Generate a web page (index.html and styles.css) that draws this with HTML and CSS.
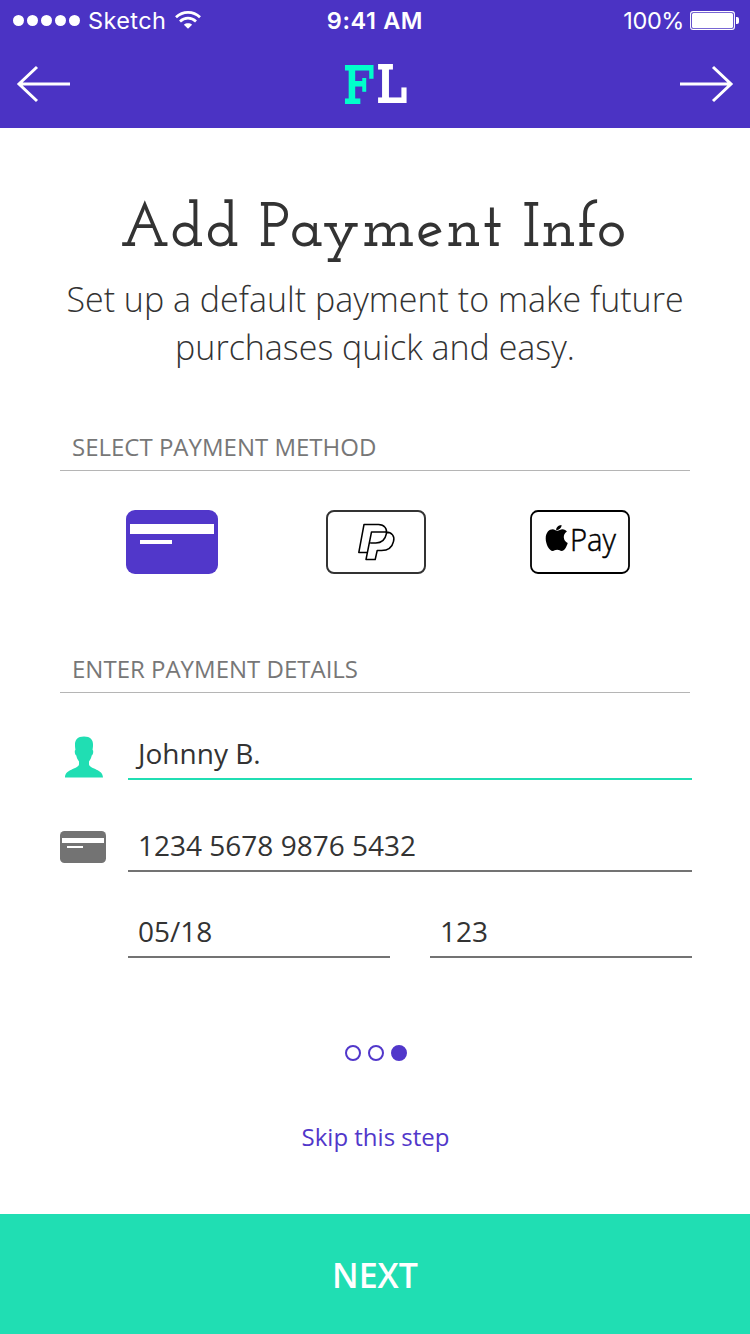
FILE: index.html
```html
<!DOCTYPE html>
<html lang="en">
<head>
<meta charset="utf-8">
<title>Add Payment Info</title>
<link rel="stylesheet" href="styles.css">
</head>
<body>
<div class="screen">
  <header class="header">
    <div class="status">
      <div class="carrier">
        <span class="signal"><i></i><i></i><i></i><i></i><i></i></span>
        <span class="carrier-name">Sketch</span>
        <svg class="wifi" width="26" height="18" viewBox="0 0 26 18" fill="none" stroke="#fff" stroke-width="2.7">
          <path d="M1 6.3C7.8-.3 18.2-.3 25 6.3"/>
          <path d="M5 10.4C9.6 6 16.4 6 21 10.4"/>
          <path d="M13 17.8l-4.1-4.1C11.200 11.900 14.800 11.900 17.100 13.700z" fill="#fff" stroke="none"/>
        </svg>
      </div>
      <div class="time">9:41 AM</div>
      <div class="power">
        <span class="percent">100%</span>
        <svg width="49" height="20" viewBox="0 0 49 20">
          <rect x=".6" y=".6" width="43.800" height="17.800" rx="2.500" fill="none" stroke="#fff" stroke-width="1.100"/>
          <rect x="2" y="2" width="41" height="15" rx="1.500" fill="#fff"/>
          <path d="M46 6h1q2 0 2 2v3q0 2-2 2h-1z" fill="#fff"/>
        </svg>
      </div>
    </div>
    <nav class="nav">
      <svg width="54" height="38" viewBox="0 0 54 38" fill="none" stroke="#fff" stroke-width="3"><path d="M21 2L3 19l18 17M3 19h51"/></svg>
      <svg class="logo" width="66" height="44" viewBox="0 0 66 44">
        <text class="logo-f" x="1" y="42" textLength="32" lengthAdjust="spacingAndGlyphs">F</text>
        <text class="logo-l" x="34" y="41" textLength="32" lengthAdjust="spacingAndGlyphs">L</text>
      </svg>
      <svg width="54" height="38" viewBox="0 0 54 38" fill="none" stroke="#fff" stroke-width="3"><path d="M33 2l18 17-18 17M51 19H0"/></svg>
    </nav>
  </header>

  <main class="content">
    <h1 class="title"><span class="word">Add</span><span class="word">Payment</span><span class="word word-info">Info</span></h1>
    <p class="subtitle">Set up a default payment to make future<br>purchases quick and easy.</p>

    <h2 class="section section-method">SELECT PAYMENT METHOD</h2>
    <div class="methods">
      <svg width="92" height="64" viewBox="0 0 92 64">
        <rect width="92" height="64" rx="9" fill="#5137ca"/>
        <path d="M4 14h84v10H4zM14 30h32v4H14z" fill="#fff"/>
      </svg>
      <svg width="100" height="64" viewBox="0 0 100 64" fill="none" stroke="#333" stroke-width="2">
        <rect x="1" y="1" width="98" height="62" rx="7"/>
        <path stroke="#000" stroke-width="1.500" stroke-linejoin="round" d="M41 42.500h-8.200L38 14.500h14.500c6 0 9 4.500 7.800 9.500-1.200 6-5.200 9-10.500 9h-5.600M40 49.500L45.500 22H60c6 0 9 4.500 7.500 9.500-1.500 6.500-6 9-12 9h-4.300l-2 9z"/>
      </svg>
      <svg width="100" height="64" viewBox="0 0 100 64">
        <rect x="1" y="1" width="98" height="62" rx="7" fill="none" stroke="#000" stroke-width="1.800"/>
        <path d="M27 20.700c2-.1 3.700-1.500 5.300-1.500 2.100 0 3.900 1 4.600 2.300-4.600 2.700-3.800 9.500.8 11.400-1.100 3.800-3.300 8-6 8-1.700 0-2.300-1.100-4.500-1.100s-2.900 1.100-4.500 1.100c-3.400 0-7-6.800-7-12.500 0-6 3.500-9.200 7-9.200 1.700 0 3.100 1.400 4.300 1.500zM26.200 20.200c-.2-2.500 2-4.800 5.300-5.100.3 2.700-2.300 5.100-5.300 5.100z"/>
        <text class="pay" x="40" y="41" textLength="46" lengthAdjust="spacingAndGlyphs">Pay</text>
      </svg>
    </div>

    <h2 class="section section-details">ENTER PAYMENT DETAILS</h2>
    <div class="form">
      <svg class="person" width="38" height="42" viewBox="0 0 38 42"><path fill="#20deb3" d="M19 .5c7 0 9.500 4 9 9.500-.1 1.800-.4 3-.4 4 1.200.5.500 5-.9 5.500-.5 2.800-1.300 4-2.700 6v3c1.500 5 14 4.500 14 13H0c0-8.500 12.500-8 14-13v-3c-1.400-2-2.200-3.200-2.700-6-1.400-.5-2.100-5-.9-5.500 0-1-.3-2.200-.4-4-.4-5.500 2-9.500 9-9.500z"/></svg>
      <div class="field field-name">Johnny B.</div>
      <svg class="card" width="46" height="32" viewBox="0 0 46 32">
        <rect width="46" height="32" rx="4.500" fill="#737373"/>
        <path d="M2 7h42v5H2zM7 15h16v2H7z" fill="#fff"/>
      </svg>
      <div class="field field-number">1234 5678 9876 5432</div>
      <div class="pair">
        <div class="field">05/18</div>
        <div class="field">123</div>
      </div>
    </div>

    <div class="dots"><i></i><i></i><i class="current"></i></div>
    <a class="skip">Skip this step</a>
  </main>
  <div class="next">NEXT</div>
</div>
</body>
</html>
```
FILE: styles.css
```css
* { box-sizing: border-box; }
body { margin: 0; background: #fff; font-family: "Open Sans", sans-serif; color: #333; }
svg { display: block; flex: none; }
.screen { width: 750px; height: 1334px; display: flex; flex-direction: column; overflow: hidden; }

.header { height: 128px; background: #4b33c4; color: #fff; }
.status { height: 40px; padding: 1px 11px 0 13px; display: grid; grid-template-columns: 1fr auto 1fr; align-items: center; font: 24px/40px Inter, sans-serif; }
.carrier { display: flex; align-items: center; }
.signal { display: flex; gap: 3px; margin: -1px 8px 0 0; }
.signal i { width: 11px; height: 11px; border-radius: 50%; background: #fff; }
.carrier-name { font-size: 23.5px; letter-spacing: .4px; margin-right: 9px; }
.wifi { margin-top: -3px; }
.time { font-weight: 600; font-size: 23.5px; letter-spacing: .6px; margin-right: 2px; }
.power { display: flex; align-items: center; justify-content: flex-end; gap: 6px; }
.percent { font-size: 23.5px; letter-spacing: -.4px; }
.power svg { margin-top: -1px; }
.nav { height: 88px; padding: 0 16px; display: flex; justify-content: space-between; align-items: center; }
.logo { overflow: visible; }
.logo text { font: 600 65px "Rokkitt", "Roboto Slab", "Zilla Slab", "Josefin Slab", serif; }
.logo-f { fill: #00ffcb; }
.logo-l { fill: #fff; }

.content { flex: 1; padding: 0 60px; display: flex; flex-direction: column; }
.title { margin: 63px 0 0; height: 84px; padding-right: 3px; display: flex; justify-content: center; gap: 17px; font: 600 62px/80px "Josefin Slab", "Liberation Serif", serif; letter-spacing: 2.5px; }
.word-info { letter-spacing: 1px; }
.subtitle { margin: 0; text-align: center; font-weight: 300; font-size: 34px; line-height: 48px; }
.section { margin: 0; height: 46px; padding-left: 12px; border-bottom: 1px solid #b5b5b5; font-weight: 400; font-size: 24px; line-height: 44px; color: #777; }
.section-method { margin-top: 54px; }
.methods { height: 64px; margin-top: 39px; padding: 0 60px 0 66px; display: flex; justify-content: space-between; }
.methods svg:nth-child(2) { margin-left: 4px; }
.pay { font: 300 31px "Open Sans", sans-serif; stroke: #000; stroke-width: .5; }
.section-details { margin-top: 73px; }

.form { width: 632px; margin-top: 37px; display: grid; grid-template-columns: 68px 1fr; }
.person { margin: 6px 0 0 5px; }
.card { margin-top: 51px; }
.field { height: 50px; padding-left: 10px; border-bottom: 2px solid #737373; font-size: 28px; line-height: 46px; }
.field-name { border-color: #20deb3; }
.field-number { margin-top: 42px; }
.pair { grid-column: 2; margin-top: 36px; display: grid; grid-template-columns: 1fr 1fr; gap: 40px; }
.dots { margin-top: 87px; display: flex; justify-content: center; gap: 7px; padding-left: 2px; }
.dots i { width: 16px; height: 16px; border: 2px solid #5137ca; border-radius: 50%; }
.dots .current { background: #5137ca; }
.skip { margin-top: 59px; padding-left: 1px; text-align: center; font-size: 24px; line-height: 34px; color: #5137ca; }
.next { height: 120px; background: #20deb3; color: #fff; text-align: center; font-weight: 600; font-size: 34px; line-height: 123px; }
```
